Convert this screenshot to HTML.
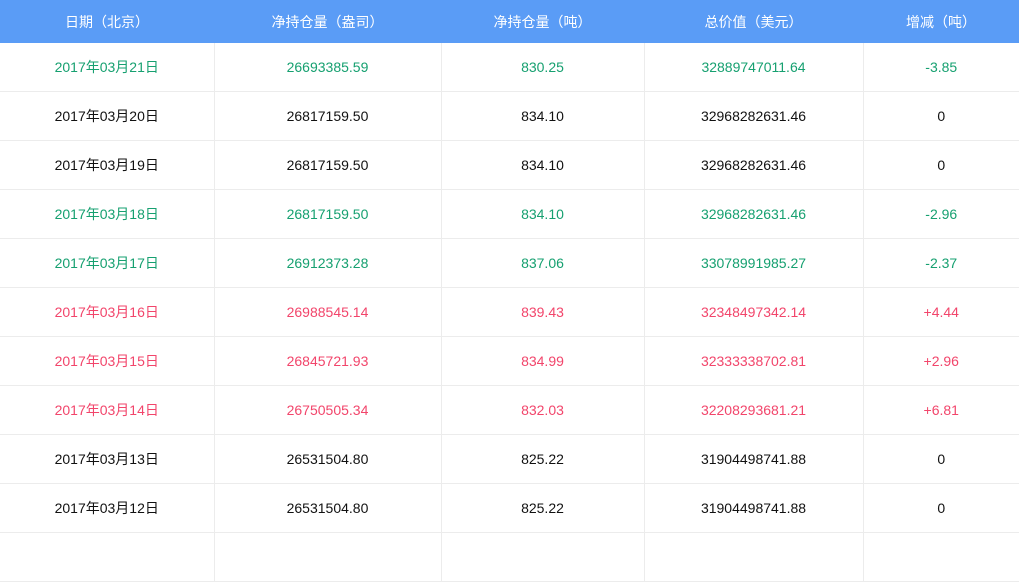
<!DOCTYPE html><html><head><meta charset="utf-8"><style>
body{margin:0;width:1019px;height:540px;overflow:hidden;background:#fff;font-family:"Liberation Sans","Noto Sans CJK SC",sans-serif;font-size:14px}
table{border-collapse:collapse;table-layout:fixed;width:1019px}
th{background:#5a9cf6;color:#fff;font-weight:normal;height:43px;padding:0;font-size:14px}
td{height:48px;padding:0;text-align:center;border-right:1px solid #ececec;border-bottom:1px solid #ececec;color:#111}
td:last-child{border-right:none}
.g td{color:#16a070}.r td{color:#f2456b}
</style></head><body><table>
<colgroup><col style="width:214px"><col style="width:227px"><col style="width:203px"><col style="width:219px"><col style="width:156px"></colgroup>
<tr><th>日期（北京）</th><th>净持仓量（盎司）</th><th>净持仓量（吨）</th><th>总价值（美元）</th><th>增减（吨）</th></tr>
<tr class="g"><td>2017年03月21日</td><td>26693385.59</td><td>830.25</td><td>32889747011.64</td><td>-3.85</td></tr>
<tr><td>2017年03月20日</td><td>26817159.50</td><td>834.10</td><td>32968282631.46</td><td>0</td></tr>
<tr><td>2017年03月19日</td><td>26817159.50</td><td>834.10</td><td>32968282631.46</td><td>0</td></tr>
<tr class="g"><td>2017年03月18日</td><td>26817159.50</td><td>834.10</td><td>32968282631.46</td><td>-2.96</td></tr>
<tr class="g"><td>2017年03月17日</td><td>26912373.28</td><td>837.06</td><td>33078991985.27</td><td>-2.37</td></tr>
<tr class="r"><td>2017年03月16日</td><td>26988545.14</td><td>839.43</td><td>32348497342.14</td><td>+4.44</td></tr>
<tr class="r"><td>2017年03月15日</td><td>26845721.93</td><td>834.99</td><td>32333338702.81</td><td>+2.96</td></tr>
<tr class="r"><td>2017年03月14日</td><td>26750505.34</td><td>832.03</td><td>32208293681.21</td><td>+6.81</td></tr>
<tr><td>2017年03月13日</td><td>26531504.80</td><td>825.22</td><td>31904498741.88</td><td>0</td></tr>
<tr><td>2017年03月12日</td><td>26531504.80</td><td>825.22</td><td>31904498741.88</td><td>0</td></tr>
<tr><td></td><td></td><td></td><td></td><td></td></tr>
</table></body></html>
